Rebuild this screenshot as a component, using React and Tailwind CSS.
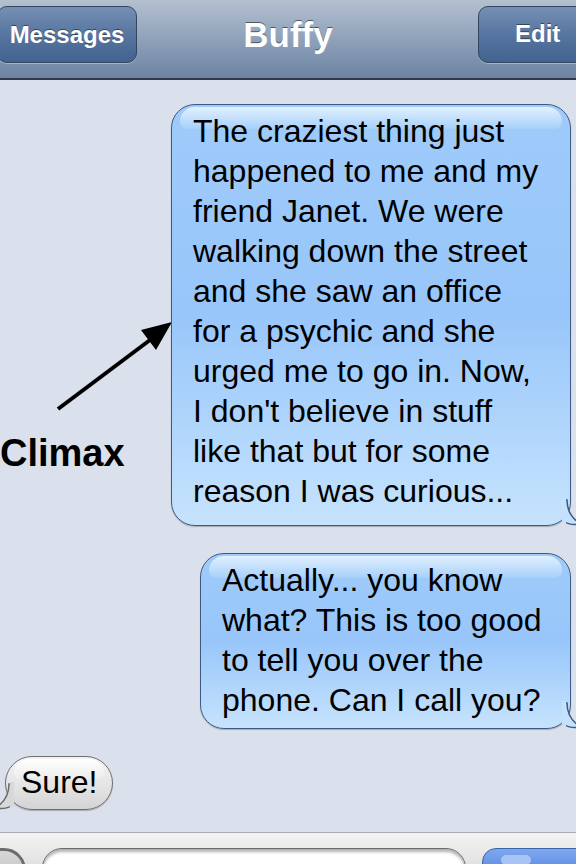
import React from "react";

const font = { fontFamily: '"Liberation Sans", Arial, sans-serif' };

const firstMsg = [
  "The craziest thing just",
  "happened to me and my",
  "friend Janet. We were",
  "walking down the street",
  "and she saw an office",
  "for a psychic and she",
  "urged me to go in. Now,",
  "I don't believe in stuff",
  "like that but for some",
  "reason I was curious...",
];

const secondMsg = [
  "Actually... you know",
  "what? This is too good",
  "to tell you over the",
  "phone. Can I call you?",
];

function Tail({ side, fill }) {
  // curled tail at the bottom corner of a bubble
  if (side === "right") {
    return (
      <svg className="absolute right-[-12px] bottom-[-1px]" width="20" height="28" viewBox="0 0 20 28">
        <path d="M0 2 L5 2 Q5 18 19 26 Q8 28 1 23 Z" fill={fill} stroke="#3e5a82" strokeWidth="1.5" />
        <rect x="0" y="0" width="4" height="25" fill={fill} />
      </svg>
    );
  }
  return (
    <svg className="absolute left-[-12px] bottom-[-1px]" width="20" height="28" viewBox="0 0 20 28">
      <path d="M20 2 L15 2 Q15 18 1 26 Q12 28 19 23 Z" fill={fill} stroke="#6a6a6a" strokeWidth="1.5" />
      <rect x="16" y="0" width="4" height="25" fill={fill} />
    </svg>
  );
}

function BlueBubble({ lines, className }) {
  return (
    <div
      className={`relative self-end mr-[5px] rounded-[24px] border-[1.5px] border-[#3e5a82] bg-gradient-to-b from-[#9fcbfb] via-[#98c6fa] to-[#c6e3fd] text-black text-[32px] leading-[40px] shadow-[0_1px_1px_rgba(0,0,0,0.25)] ${className}`}
    >
      <div className="absolute left-[8px] right-[8px] top-[2px] h-[22px] rounded-t-[20px] rounded-b-[10px] bg-gradient-to-b from-[#e2f0fe] to-[#a6d0fb]" />
      <div className="relative whitespace-nowrap">
        {lines.map((l) => (
          <div key={l}>{l}</div>
        ))}
      </div>
      <Tail side="right" fill="#c4e2fd" />
    </div>
  );
}

function NavButton({ children, className }) {
  return (
    <div
      className={`h-[57px] rounded-[10px] border border-[#34465f] bg-gradient-to-b from-[#7590b3] via-[#5775a0] to-[#42628f] flex items-center text-white font-bold text-[24px] shadow-[0_1px_0_rgba(255,255,255,0.35)] [text-shadow:0_-1px_0_rgba(0,0,0,0.45)] ${className}`}
    >
      {children}
    </div>
  );
}

export default function App() {
  return (
    <div className="w-[576px] h-[864px] overflow-hidden bg-[#dbe1ec] flex flex-col" style={font}>
      {/* nav bar */}
      <div className="h-[80px] shrink-0 grid grid-cols-[1fr_auto_1fr] items-center pb-[9px] border-b-[2px] border-[#2d3a4b] bg-gradient-to-b from-[#b4c0cf] via-[#8fa2ba] to-[#6c83a2]">
        <NavButton className="justify-self-start ml-[-3px] w-[140px] justify-center">
          <span>Messages</span>
        </NavButton>
        <div className="text-white font-bold text-[35px] mt-[2px] [text-shadow:0_-1px_0_rgba(0,0,0,0.5)]">Buffy</div>
        <NavButton className="justify-self-end mr-[-16px] w-[114px] pl-[36px]">
          <span className="mt-[-2px]">Edit</span>
        </NavButton>
      </div>

      {/* messages */}
      <div className="flex-1 flex flex-col pt-[24px] gap-[27px]">
        <div className="relative flex justify-end">
          <svg className="absolute left-0 top-[200px]" width="175" height="120" viewBox="0 0 175 120">
            <line x1="58" y1="105" x2="158" y2="30" stroke="#000" strokeWidth="4" />
            <polygon points="172,18 141,26 156,46" fill="#000" />
          </svg>
          <div className="absolute left-0 top-[321px] font-bold text-[38px] text-black">Climax</div>
          <BlueBubble lines={firstMsg} className="w-[400px] pl-[21px] pt-[6px] pb-[14px]" />
        </div>

        <BlueBubble lines={secondMsg} className="w-[371px] pl-[21px] pt-[6px] pb-[8px]" />

        <div className="relative self-start ml-[5px] h-[54px] px-[15px] flex items-center rounded-[27px] border-[1.5px] border-[#6f6f6f] bg-gradient-to-b from-[#f4f4f4] via-[#e6e6e6] to-[#d4d4d4] text-[32px] text-black shadow-[0_1px_1px_rgba(0,0,0,0.25)]">
          <div className="absolute left-[8px] right-[8px] top-[2px] h-[20px] rounded-t-[20px] rounded-b-[8px] bg-gradient-to-b from-white to-[#ececec]" />
          <span className="relative mt-[-2px]">Sure!</span>
          <Tail side="left" fill="#d8d8d8" />
        </div>
      </div>

      {/* input bar */}
      <div className="h-[32px] shrink-0 flex items-start gap-[16px] pt-[15px] ml-[-22px] border-t border-[#a8acb3] bg-gradient-to-b from-[#f3f3f3] to-[#e2e2e2]">
        <div className="shrink-0 h-[44px] w-[48px] rounded-full border-[3px] border-[#6d6d6d] bg-gradient-to-b from-[#d8d8d8] to-[#b9b9b9]" />
        <div className="shrink-0 h-[40px] w-[424px] rounded-[20px] border-[1.5px] border-[#6a6a6a] bg-white shadow-[inset_0_3px_3px_rgba(0,0,0,0.3)]" />
        <div className="shrink-0 h-[40px] w-[120px] pl-[18px] pt-[6px] rounded-[14px] border border-[#3b63a8] bg-gradient-to-b from-[#7fa8ee] to-[#3f73d9]">
          <div className="h-[10px] w-[30px] rounded-full bg-[#a8c4f4]" />
        </div>
      </div>
    </div>
  );
}
